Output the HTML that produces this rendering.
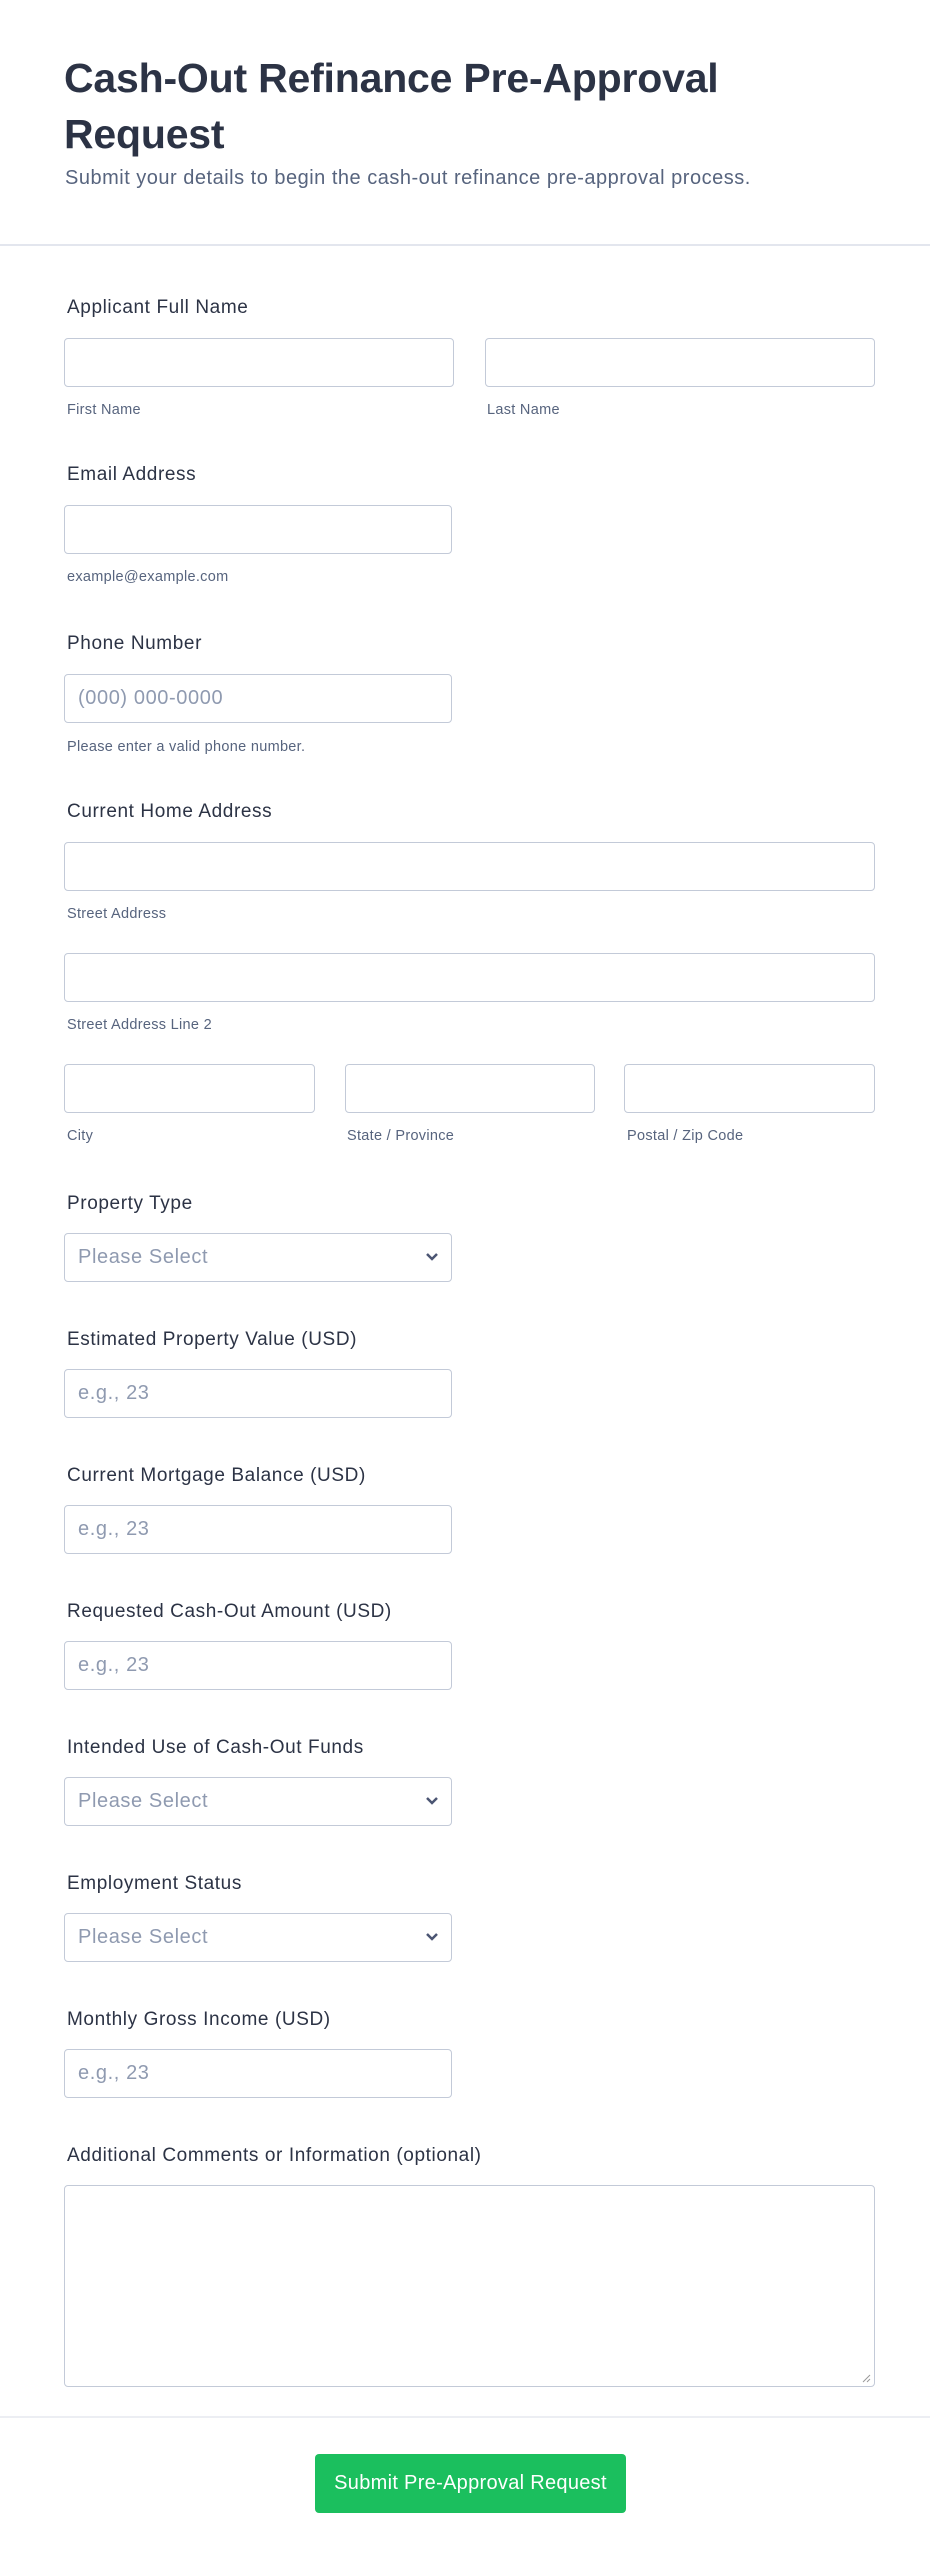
<!DOCTYPE html>
<html><head><meta charset="utf-8"><style>
*{box-sizing:border-box;margin:0;padding:0}
body{width:930px;height:2564px;background:#fff;font-family:"Liberation Sans",sans-serif;color:#2c3345;position:relative;overflow:hidden}
.a{position:absolute}
h1{position:absolute;left:64px;top:50px;font-size:41px;line-height:56px;font-weight:bold;color:#2c3345;width:780px;letter-spacing:-0.2px}
.sub{left:65px;top:167px;font-size:20px;letter-spacing:0.5px;color:#57647e}
.hr{left:0;width:930px;height:2px;background:#e3e6ee}
.lb{left:67px;font-size:19px;letter-spacing:0.6px;line-height:22px;color:#2c3345}
.in{border:1px solid #c3cad8;border-radius:4px;height:49px;background:#fff}
.ph{font-size:20px;letter-spacing:0.6px;color:#8f9ab0;position:absolute;left:13px;top:12px}
.sl{font-size:14.5px;letter-spacing:0.3px;color:#57647e;line-height:16px}
.ch{position:absolute;right:12px;top:18px}
</style></head><body>
<h1>Cash-Out Refinance Pre-Approval Request</h1>
<div class="a sub">Submit your details to begin the cash-out refinance pre-approval process.</div>
<div class="a hr" style="top:244px"></div>

<div class="a lb" style="top:297px">Applicant Full Name</div>
<div class="a in" style="left:64px;top:338px;width:390px"></div>
<div class="a in" style="left:485px;top:338px;width:390px"></div>
<div class="a sl" style="left:67px;top:402px">First Name</div>
<div class="a sl" style="left:487px;top:402px">Last Name</div>

<div class="a lb" style="top:464px">Email Address</div>
<div class="a in" style="left:64px;top:505px;width:388px"></div>
<div class="a sl" style="left:67px;top:569px">example@example.com</div>

<div class="a lb" style="top:633px">Phone Number</div>
<div class="a in" style="left:64px;top:674px;width:388px"><span class="ph">(000) 000-0000</span></div>
<div class="a sl" style="left:67px;top:739px">Please enter a valid phone number.</div>

<div class="a lb" style="top:801px">Current Home Address</div>
<div class="a in" style="left:64px;top:842px;width:811px"></div>
<div class="a sl" style="left:67px;top:906px">Street Address</div>
<div class="a in" style="left:64px;top:953px;width:811px"></div>
<div class="a sl" style="left:67px;top:1017px">Street Address Line 2</div>
<div class="a in" style="left:64px;top:1064px;width:251px"></div>
<div class="a in" style="left:345px;top:1064px;width:250px"></div>
<div class="a in" style="left:624px;top:1064px;width:251px"></div>
<div class="a sl" style="left:67px;top:1128px">City</div>
<div class="a sl" style="left:347px;top:1128px">State / Province</div>
<div class="a sl" style="left:627px;top:1128px">Postal / Zip Code</div>

<div class="a lb" style="top:1193px">Property Type</div>
<div class="a in" style="left:64px;top:1233px;width:388px"><span class="ph">Please Select</span><svg class="ch" width="14" height="10" viewBox="0 0 14 10"><path d="M2 2l5 5 5-5" fill="none" stroke="#4b5573" stroke-width="2.5"/></svg></div>

<div class="a lb" style="top:1329px">Estimated Property Value (USD)</div>
<div class="a in" style="left:64px;top:1369px;width:388px"><span class="ph">e.g., 23</span></div>

<div class="a lb" style="top:1465px">Current Mortgage Balance (USD)</div>
<div class="a in" style="left:64px;top:1505px;width:388px"><span class="ph">e.g., 23</span></div>

<div class="a lb" style="top:1601px">Requested Cash-Out Amount (USD)</div>
<div class="a in" style="left:64px;top:1641px;width:388px"><span class="ph">e.g., 23</span></div>

<div class="a lb" style="top:1737px">Intended Use of Cash-Out Funds</div>
<div class="a in" style="left:64px;top:1777px;width:388px"><span class="ph">Please Select</span><svg class="ch" width="14" height="10" viewBox="0 0 14 10"><path d="M2 2l5 5 5-5" fill="none" stroke="#4b5573" stroke-width="2.5"/></svg></div>

<div class="a lb" style="top:1873px">Employment Status</div>
<div class="a in" style="left:64px;top:1913px;width:388px"><span class="ph">Please Select</span><svg class="ch" width="14" height="10" viewBox="0 0 14 10"><path d="M2 2l5 5 5-5" fill="none" stroke="#4b5573" stroke-width="2.5"/></svg></div>

<div class="a lb" style="top:2009px">Monthly Gross Income (USD)</div>
<div class="a in" style="left:64px;top:2049px;width:388px"><span class="ph">e.g., 23</span></div>

<div class="a lb" style="top:2145px">Additional Comments or Information (optional)</div>
<div class="a in" style="left:64px;top:2185px;width:811px;height:202px"><svg style="position:absolute;right:3px;bottom:3px" width="10" height="10"><path d="M9 2L2 9M9 6L6 9" stroke="#999" stroke-width="1"/></svg></div>

<div class="a hr" style="top:2416px;background:#eceef3"></div>
<div class="a" style="left:315px;top:2454px;width:311px;height:59px;background:#1bbf5e;border-radius:4px;color:#fff;font-size:20px;letter-spacing:0.3px;line-height:59px;text-align:center">Submit Pre-Approval Request</div>
</body></html>
